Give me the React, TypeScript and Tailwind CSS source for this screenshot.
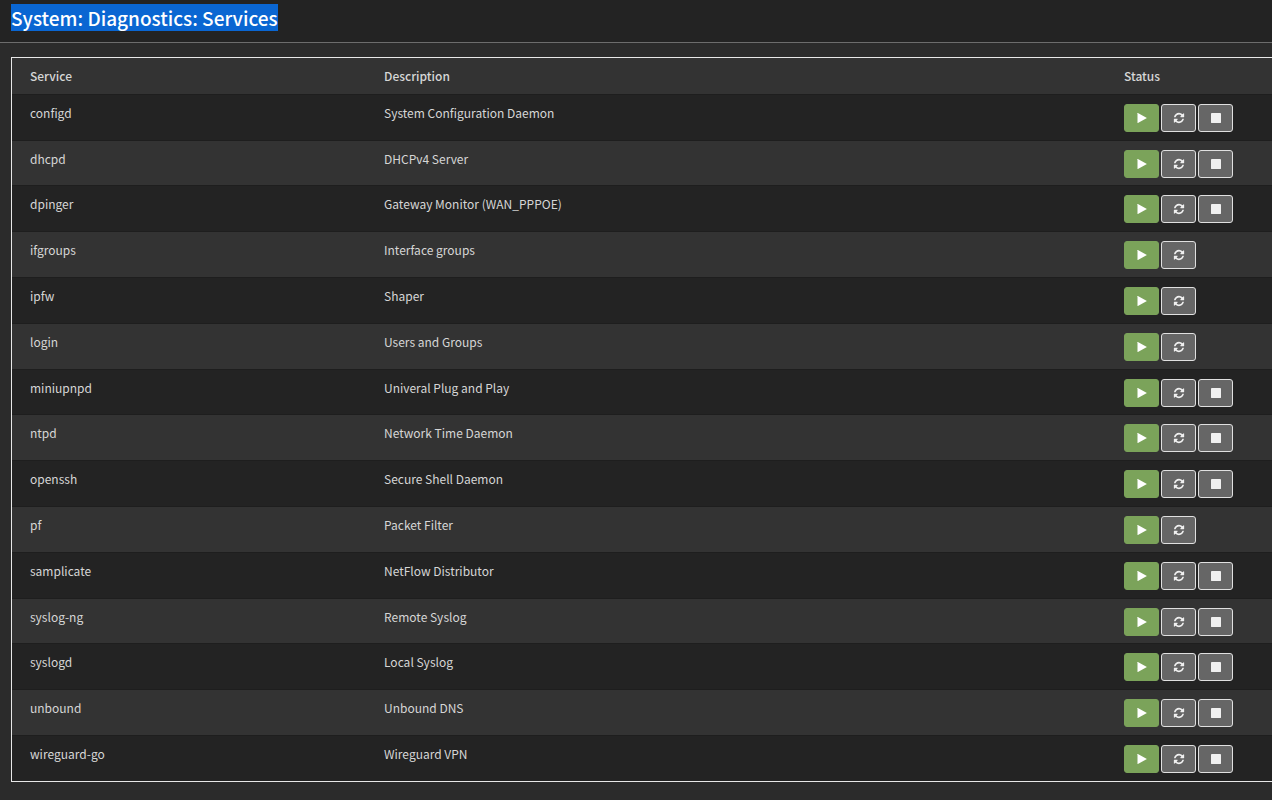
import React from 'react';

interface Service {
  name: string;
  description: string;
  canStop: boolean;
}

const services: Service[] = [
  { name: 'configd', description: 'System Configuration Daemon', canStop: true },
  { name: 'dhcpd', description: 'DHCPv4 Server', canStop: true },
  { name: 'dpinger', description: 'Gateway Monitor (WAN_PPPOE)', canStop: true },
  { name: 'ifgroups', description: 'Interface groups', canStop: false },
  { name: 'ipfw', description: 'Shaper', canStop: false },
  { name: 'login', description: 'Users and Groups', canStop: false },
  { name: 'miniupnpd', description: 'Univeral Plug and Play', canStop: true },
  { name: 'ntpd', description: 'Network Time Daemon', canStop: true },
  { name: 'openssh', description: 'Secure Shell Daemon', canStop: true },
  { name: 'pf', description: 'Packet Filter', canStop: false },
  { name: 'samplicate', description: 'NetFlow Distributor', canStop: true },
  { name: 'syslog-ng', description: 'Remote Syslog', canStop: true },
  { name: 'syslogd', description: 'Local Syslog', canStop: true },
  { name: 'unbound', description: 'Unbound DNS', canStop: true },
  { name: 'wireguard-go', description: 'Wireguard VPN', canStop: true },
];

const PlayIcon = () => (
  <svg viewBox="0 0 10 10" className="w-[10px] h-[10px]" fill="currentColor" aria-hidden="true">
    <path d="M0.5 0.3v9.4q0 .4.4.2l8.6-4.6q.4-.3 0-.6L.9.1Q.5-.1.5.3z" />
  </svg>
);

const RefreshIcon = () => (
  <svg viewBox="0 0 1792 1792" className="w-3 h-3" fill="currentColor" aria-hidden="true">
    <path d="M1639 1056q0 5-1 7-64 268-268 434.5t-478 166.5q-146 0-282.5-55t-243.5-157l-129 129q-19 19-45 19t-45-19-19-45v-448q0-26 19-45t45-19h448q26 0 45 19t19 45-19 45l-137 137q71 66 161 102t187 36q134 0 250-65t186-179q11-17 53-117 8-23 30-23h192q13 0 22.5 9.5t9.5 22.5zm25-800v448q0 26-19 45t-45 19h-448q-26 0-45-19t-19-45 19-45l138-138q-148-137-349-137-134 0-250 65t-186 179q-11 17-53 117-8 23-30 23h-199q-13 0-22.5-9.5t-9.5-22.5v-7q65-268 270-434.5t480-166.5q146 0 284 55.5t245 156.5l130-129q19-19 45-19t45 19 19 45z" />
  </svg>
);

const StopIcon = () => (
  <svg viewBox="0 0 10 10" className="w-[10px] h-[10px]" fill="currentColor" aria-hidden="true">
    <rect width="10" height="10" rx="0.4" />
  </svg>
);

interface ActionButtonProps {
  label: string;
  running?: boolean;
  children: React.ReactNode;
}

const ActionButton: React.FC<ActionButtonProps> = ({ label, running = false, children }) => (
  <button
    type="button"
    aria-label={label}
    title={label}
    className={`flex h-7 w-[35px] items-center justify-center rounded-[3px] border ${
      running ? 'border-[#7ba35a] bg-[#7ba35a] text-white' : 'border-[#e0e0e0] bg-[#666666] text-[#f0f0f0]'
    }`}
  >
    {children}
  </button>
);

export default function App() {
  return (
    <div className="min-h-screen bg-[#2b2b2b] font-['Noto_Sans_CJK_SC',sans-serif] text-xs leading-5 text-[#d6d6d6]">
      <header className="border-b border-[#6c6c6c] bg-[#232323] pt-1 pb-[11px] pl-[11px]">
        <h1 className="text-[19px] leading-[27px] font-medium text-white">
          <span className="inline-block bg-[#0a66d2]">System: Diagnostics: Services</span>
        </h1>
      </header>

      <main className="pt-[14px] pb-[18px] pl-[11px]">
        <div className="border-y border-l border-[#e8e8e8]">
          <table className="w-full table-fixed border-collapse text-left">
            <thead>
              <tr className="h-9 bg-[#333333]">
                <th className="w-[354px] pl-[18px] font-medium">Service</th>
                <th className="pl-[18px] font-medium">Description</th>
                <th className="w-[166px] pl-[18px] font-medium">Status</th>
              </tr>
            </thead>
            <tbody>
              {services.map((service) => (
                <tr
                  key={service.name}
                  className="h-[46px] border-t border-[#1e1e1e] align-top odd:bg-[#232323] even:bg-[#333333] nth-[5n+2]:h-[45px]"
                >
                  <td className="pt-2 pl-[18px]">{service.name}</td>
                  <td className="pt-2 pl-[18px]">{service.description}</td>
                  <td className="pt-[9px] pl-[18px]">
                    <div className="flex gap-[2px]">
                      <ActionButton label={`${service.name} is running`} running>
                        <PlayIcon />
                      </ActionButton>
                      <ActionButton label={`Restart ${service.name}`}>
                        <RefreshIcon />
                      </ActionButton>
                      {service.canStop && (
                        <ActionButton label={`Stop ${service.name}`}>
                          <StopIcon />
                        </ActionButton>
                      )}
                    </div>
                  </td>
                </tr>
              ))}
            </tbody>
          </table>
        </div>
      </main>
    </div>
  );
}
